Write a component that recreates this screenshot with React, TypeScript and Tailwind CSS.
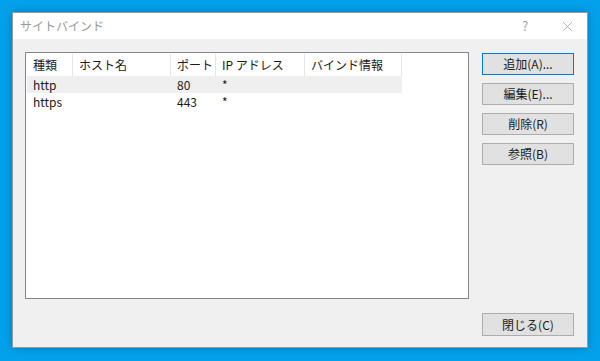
import { X } from "lucide-react";

const COLUMNS = [
  { label: "種類", w: "w-[46px]" },
  { label: "ホスト名", w: "w-[98px]" },
  { label: "ポート", w: "w-[45px]" },
  { label: "IP アドレス", w: "w-[89px]" },
  { label: "バインド情報", w: "w-[97px]" },
];

const ROWS = [
  { cells: ["http", "", "80", "*", ""], shaded: true },
  { cells: ["https", "", "443", "*", ""], shaded: false },
];

function DlgButton({ label, focused }: { label: string; focused?: boolean }) {
  return (
    <button
      className={`h-[22px] w-[92px] bg-[#e1e1e1] border text-[12px] text-[#1a1a1a] leading-none flex items-center justify-center ${
        focused ? "border-[#0078d7]" : "border-[#adadad]"
      }`}
    >
      {label}
    </button>
  );
}

export default function App() {
  return (
    <div className="w-[600px] h-[361px] bg-[#03a1ec] pt-[12px] pl-[12px] font-['Noto_Sans_CJK_JP',sans-serif] overflow-hidden">
      <div className="w-[576px] h-[336px] border border-[#8f9aa3] bg-[#f0f0f0] flex flex-col shadow-[0_0_8px_rgba(0,0,0,0.25)]">
        {/* title bar */}
        <div className="h-[26px] bg-white flex items-center pl-[7px]">
          <span className="text-[12px] text-[#999999]">サイトバインド</span>
          <div className="flex-1" />
          <span className="text-[13px] text-[#a0a0a0] w-[20px] text-center mr-[24px]">?</span>
          <X size={17} strokeWidth={0.9} className="text-[#8a8a8a] mr-[11px]" />
        </div>

        {/* body */}
        <div className="flex-1 flex flex-col pt-[13px] pl-[12px] pr-[13px] pb-[11px]">
          <div className="flex gap-[13px]">
            <div className="w-[444px] h-[247px] bg-white border border-[#828790] pt-px pl-px">
              <div className="flex h-[22px]">
                {COLUMNS.map((c) => (
                  <div
                    key={c.label}
                    className={`${c.w} border-r border-[#e5e5e5] pl-[6px] flex items-center text-[12px] text-[#1a1a1a]`}
                  >
                    {c.label}
                  </div>
                ))}
              </div>
              {ROWS.map((r, i) => (
                <div key={i} className={`flex h-[17px] w-[375px] ${r.shaded ? "bg-[#efefef]" : ""}`}>
                  {r.cells.map((v, j) => (
                    <div
                      key={j}
                      className={`${COLUMNS[j].w} pl-[6px] flex items-center text-[12px] text-[#1a1a1a]`}
                    >
                      {v}
                    </div>
                  ))}
                </div>
              ))}
            </div>

            <div className="flex flex-col gap-[8px] pt-px">
              <DlgButton label="追加(A)..." focused />
              <DlgButton label="編集(E)..." />
              <DlgButton label="削除(R)" />
              <DlgButton label="参照(B)" />
            </div>
          </div>

          <div className="flex-1" />

          <div className="flex justify-end">
            <button className="h-[23px] w-[92px] bg-[#e1e1e1] border border-[#adadad] text-[12px] text-[#1a1a1a] leading-none flex items-center justify-center">
              閉じる(C)
            </button>
          </div>
        </div>
      </div>
    </div>
  );
}
